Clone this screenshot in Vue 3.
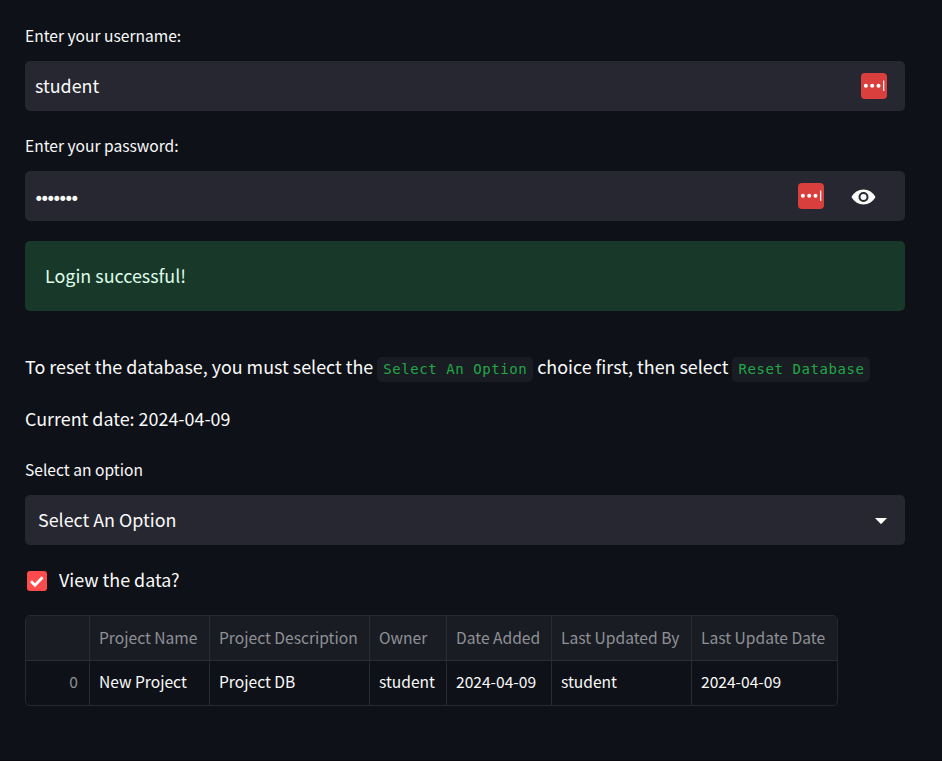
<script setup>
import { ref } from 'vue'

const username = ref('student')
const maskedPassword = '•'.repeat(7)
const columns = ['', 'Project Name', 'Project Description', 'Owner', 'Date Added', 'Last Updated By', 'Last Update Date']
const rows = [['0', 'New Project', 'Project DB', 'student', '2024-04-09', 'student', '2024-04-09']]
</script>

<template>
  <main class="page">
    <div class="label">Enter your username:</div>
    <div class="field">
      <span class="value">{{ username }}</span>
      <svg class="manager" viewBox="0 0 26 26">
        <rect width="26" height="26" rx="4" />
        <circle cx="4.900" cy="12.800" r="2" /><circle cx="11.200" cy="12.800" r="2" /><circle cx="17.500" cy="12.800" r="2" />
        <path d="M22.700 7.500v10.500" />
      </svg>
    </div>

    <div class="label second">Enter your password:</div>
    <div class="field password">
      <span class="value dots">{{ maskedPassword }}</span>
      <svg class="manager" viewBox="0 0 26 26">
        <rect width="26" height="26" rx="4" />
        <circle cx="4.900" cy="12.800" r="2" /><circle cx="11.200" cy="12.800" r="2" /><circle cx="17.500" cy="12.800" r="2" />
        <path d="M22.700 7.500v10.500" />
      </svg>
      <svg class="eye" viewBox="0 0 24 16">
        <path fill-rule="evenodd" d="M12 .5C7 .5 2.200 3.500 0 8c2.200 4.500 7 7.500 12 7.500S21.800 12.500 24 8C21.800 3.500 17 .5 12 .5zM12 3a5 5 0 1 1 0 10A5 5 0 0 1 12 3zM12 5a3 3 0 1 0 0 6a3 3 0 0 0 0-6z" />
      </svg>
    </div>

    <div class="alert"><span>Login successful!</span></div>

    <p class="text reset">To reset the database, you must select the <code>Select An Option</code> choice first, then select <code>Reset Database</code></p>
    <p class="text date">Current date: 2024-04-09</p>

    <div class="label option">Select an option</div>
    <div class="field select">
      <span class="value">Select An Option</span>
      <svg class="arrow" viewBox="0 0 12 6"><path d="M0 0h12L6.700 5.600q-.7.6-1.400 0z" /></svg>
    </div>

    <div class="check">
      <span class="box"><svg viewBox="0 0 20 20"><path d="M4 10.300l4 4 7.600-8" /></svg></span>
      <span class="checktext">View the data?</span>
    </div>

    <div class="table">
      <div class="row head"><div v-for="c in columns" :key="c" class="cell">{{ c }}</div></div>
      <div v-for="r in rows" :key="r[0]" class="row body"><div v-for="(v, i) in r" :key="i" class="cell">{{ v }}</div></div>
    </div>
  </main>
</template>

<style>
body { background: #0e1117; }
</style>

<style scoped>
.page {
  box-sizing: border-box;
  height: 761px;
  overflow: hidden;
  padding: 22px 37px 0 25px;
  border-bottom: 1px solid #0b0910;
  background: #0e1117;
  color: #fafafa;
  font-family: "Noto Sans CJK SC", "Noto Sans", sans-serif;
  font-size: 17.9px;
}
.label { height: 26px; line-height: 26px; margin-bottom: 13px; font-size: 15.6px; white-space: nowrap; }
.second { margin-top: 21px; }
.field {
  display: flex;
  align-items: center;
  box-sizing: border-box;
  height: 50px;
  padding: 0 18px 0 10px;
  border-radius: 5px;
  background: #262730;
}
.value { flex: 1; padding-bottom: 2px; line-height: 30px; }
.dots { padding: 5px 0 0; font-family: "DejaVu Sans", sans-serif; font-size: 17px; letter-spacing: -4.03px; text-indent: -1.2px; }
.manager { width: 26px; height: 26px; }
.manager rect { fill: #d93f3c; }
.manager circle { fill: #fff; }
.manager path { stroke: #fff; stroke-width: 1.2; }
.password { padding-right: 29px; }
.eye { width: 25px; height: 16px; margin: 1px 0 0 27px; fill: #fafafa; }
.alert {
  display: flex;
  align-items: center;
  box-sizing: border-box;
  height: 70px;
  margin-top: 20px;
  padding: 0 0 2px 20px;
  border-radius: 5px;
  background: #183929;
  color: #dffde9;
}
.text { margin: 0; line-height: 32px; white-space: nowrap; }
.reset { margin-top: 39px; height: 32px; }
.date { margin-top: 20px; height: 32px; }
code {
  display: inline-block;
  height: 25px;
  line-height: 25px;
  padding: 0 6px;
  border-radius: 5px;
  background: #1a1c24;
  color: #21a745;
  font-family: "DejaVu Sans Mono", monospace;
  font-size: 14px;
  letter-spacing: 0.57px;
}
.option { margin-top: 22px; }
.select { padding-left: 13px; }
.arrow { width: 12px; height: 6px; margin-top: 2px; fill: #fff; }
.check { display: flex; align-items: center; height: 32px; margin-top: 20px; padding-left: 2px; gap: 12px; }
.checktext { padding-bottom: 4px; }
.box { width: 20px; height: 20px; border-radius: 3px; background: #ff4b4b; }
.box svg { display: block; width: 20px; height: 20px; fill: none; stroke: #fff; stroke-width: 2.800; }
.table {
  box-sizing: border-box;
  width: 813px;
  margin-top: 18px;
  border: 1px solid #262930;
  border-radius: 5px;
  overflow: hidden;
  font-size: 15.6px;
}
.row { display: grid; grid-template-columns: 64px 120px 160px 77px 105px 140px 1fr; height: 44px; line-height: 42px; }
.head { background: #1a1c23; color: #8f9196; border-bottom: 1px solid #2b2e35; }
.body { line-height: 41px; }
.cell { padding-left: 9px; border-right: 1px solid #292c33; white-space: nowrap; }
.cell:last-child { border-right: 0; }
.cell:first-child { padding: 0 11px 0 0; text-align: right; color: #8f9196; }
</style>
